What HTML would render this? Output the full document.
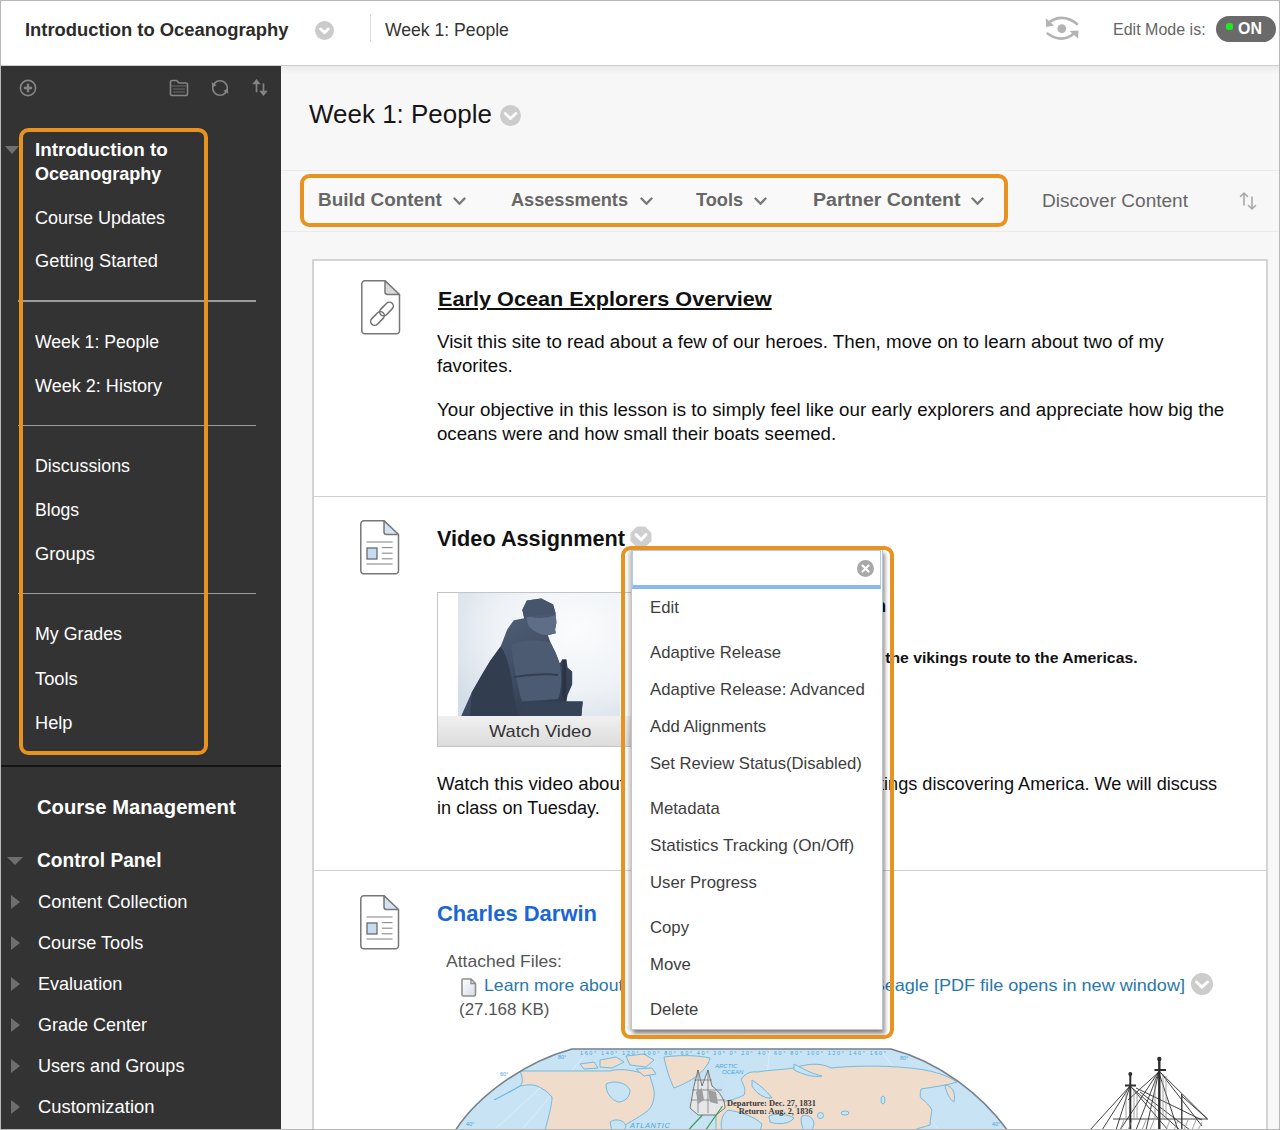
<!DOCTYPE html>
<html><head><meta charset="utf-8">
<style>
html,body{margin:0;padding:0;}
body{width:1280px;height:1130px;overflow:hidden;position:relative;background:#f8f7f8;font-family:"Liberation Sans",sans-serif;}
.a{position:absolute;}
.tx{position:absolute;white-space:nowrap;line-height:1;transform-origin:0 50%;}
</style></head><body>
<!-- main bg -->
<div class="a" style="left:281px;top:66px;width:999px;height:8px;background:linear-gradient(#ebeaeb,#f8f7f8)"></div>
<!-- header -->
<div class="a" style="left:0;top:0;width:1280px;height:65px;background:#fff;border-bottom:1px solid #cfcfcf"></div>
<svg style="position:absolute;left:314.9px;top:21.1px" width="19" height="19" viewBox="0 0 21 21"><circle cx="10.5" cy="10.5" r="10.5" fill="#cbcbcb"/><path d="M6.26 8.90 L10.50 12.90 L14.74 8.90" fill="none" stroke="#fff" stroke-width="3.2" stroke-linecap="round" stroke-linejoin="round"/></svg>
<div class="a" style="left:370px;top:14px;width:1px;height:28px;background:#dcdcdc"></div>
<svg class="a" style="left:1040px;top:10px" width="45" height="38" viewBox="0 0 45 38">
 <g fill="none" stroke="#b3b3b3" stroke-width="2.6" stroke-linecap="round">
  <path d="M37 14 Q23 3 9.5 12"/>
  <path d="M7.5 23.5 Q22 34 34.5 23"/>
 </g>
 <g fill="#b3b3b3">
  <polygon points="5.8,8.2 6.2,17 14,15.6"/>
  <polygon points="38.5,20.5 29.5,21 38,28.5"/>
  <circle cx="21.8" cy="18.6" r="4.4"/>
 </g>
</svg>
<div class="a" style="left:1215.5px;top:16px;width:60px;height:25.5px;border-radius:13px;background:#6a6a6a"></div>
<div class="a" style="left:1225.5px;top:23px;width:7px;height:7px;border-radius:2.5px;background:#22e622"></div>
<!-- sidebar -->
<div class="a" style="left:0;top:66px;width:281px;height:1064px;background:#333333"></div>
<svg class="a" style="left:18px;top:78px" width="20" height="20" viewBox="0 0 20 20">
 <circle cx="10" cy="10" r="7.6" fill="none" stroke="#858585" stroke-width="1.6"/>
 <path d="M10 5.8 V14.2 M5.8 10 H14.2" stroke="#858585" stroke-width="2.4"/>
</svg>
<svg class="a" style="left:168px;top:78px" width="22" height="20" viewBox="0 0 22 20">
 <path d="M4 17.5 H18 A1.5 1.5 0 0 0 19.5 16 V6.5 A1.5 1.5 0 0 0 18 5 H11 L8.5 2.5 H4 A1.5 1.5 0 0 0 2.5 4 V16 A1.5 1.5 0 0 0 4 17.5 Z" fill="none" stroke="#858585" stroke-width="1.6" stroke-linejoin="round"/>
 <path d="M3 8 H19 M5 11 H17 M5 14 H17" stroke="#6a6a6a" stroke-width="1.1"/>
</svg>
<svg class="a" style="left:210px;top:78px" width="20" height="20" viewBox="0 0 20 20">
 <circle cx="10" cy="10" r="7.3" fill="none" stroke="#858585" stroke-width="1.6"/>
 <polygon points="1.6,4.2 2.4,9.6 6.6,7" fill="#858585"/>
 <polygon points="18.4,15.8 17.6,10.4 13.4,13" fill="#858585"/>
</svg>
<svg class="a" style="left:250px;top:77px" width="20" height="21" viewBox="0 0 20 21">
 <g stroke="#858585" stroke-width="1.7" stroke-linecap="round">
  <path d="M6.5 6 V14.5"/>
  <path d="M13.5 7 V15"/>
 </g>
 <g fill="#858585">
  <polygon points="2.2,7.2 6.5,2 10.8,7.2"/>
  <polygon points="9.2,13.8 13.5,19 17.8,13.8"/>
 </g>
</svg>
<div class="a" style="left:5px;top:145.5px;width:0;height:0;border-left:7px solid transparent;border-right:7px solid transparent;border-top:8px solid #707070"></div>
<div class="a" style="left:18px;top:300px;width:238px;height:1.8px;background:#9c9c9c"></div>
<div class="a" style="left:18px;top:424.5px;width:238px;height:1.8px;background:#9c9c9c"></div>
<div class="a" style="left:18px;top:592.5px;width:238px;height:1.8px;background:#9c9c9c"></div>
<div class="a" style="left:19px;top:128px;width:189px;height:627px;box-sizing:border-box;border:4.8px solid #e8921f;border-radius:9.5px"></div>
<div class="a" style="left:0;top:765px;width:281px;height:2px;background:#151515"></div>
<div class="a" style="left:7px;top:856.5px;width:0;height:0;border-left:8px solid transparent;border-right:8px solid transparent;border-top:8px solid #6e6e6e"></div>
<div style="position:absolute;left:11px;top:894.8px;width:0;height:0;border-top:7px solid transparent;border-bottom:7px solid transparent;border-left:9px solid #6e6e6e"></div><div style="position:absolute;left:11px;top:936.0px;width:0;height:0;border-top:7px solid transparent;border-bottom:7px solid transparent;border-left:9px solid #6e6e6e"></div><div style="position:absolute;left:11px;top:976.5px;width:0;height:0;border-top:7px solid transparent;border-bottom:7px solid transparent;border-left:9px solid #6e6e6e"></div><div style="position:absolute;left:11px;top:1017.8px;width:0;height:0;border-top:7px solid transparent;border-bottom:7px solid transparent;border-left:9px solid #6e6e6e"></div><div style="position:absolute;left:11px;top:1058.7px;width:0;height:0;border-top:7px solid transparent;border-bottom:7px solid transparent;border-left:9px solid #6e6e6e"></div><div style="position:absolute;left:11px;top:1099.8px;width:0;height:0;border-top:7px solid transparent;border-bottom:7px solid transparent;border-left:9px solid #6e6e6e"></div>
<!-- toolbar band -->
<div class="a" style="left:281px;top:170px;width:999px;height:60px;background:#f8f7f8;border-top:1px solid #ebeaeb;border-bottom:1px solid #ebeaeb"></div>
<div class="a" style="left:300.3px;top:174px;width:707.5px;height:53px;box-sizing:border-box;border:4.8px solid #e8921f;border-radius:9.5px;background:#f9f9f9"></div>
<svg style="position:absolute;left:452.5px;top:197px" width="13" height="9" viewBox="0 0 13 9"><path d="M1.5 1.5 L6.5 6.8 L11.5 1.5" fill="none" stroke="#7a7a7a" stroke-width="2.4" stroke-linecap="round" stroke-linejoin="round"/></svg>
<svg style="position:absolute;left:639.5px;top:197px" width="13" height="9" viewBox="0 0 13 9"><path d="M1.5 1.5 L6.5 6.8 L11.5 1.5" fill="none" stroke="#7a7a7a" stroke-width="2.4" stroke-linecap="round" stroke-linejoin="round"/></svg>
<svg style="position:absolute;left:753.5px;top:197px" width="13" height="9" viewBox="0 0 13 9"><path d="M1.5 1.5 L6.5 6.8 L11.5 1.5" fill="none" stroke="#7a7a7a" stroke-width="2.4" stroke-linecap="round" stroke-linejoin="round"/></svg>
<svg style="position:absolute;left:970.5px;top:197px" width="13" height="9" viewBox="0 0 13 9"><path d="M1.5 1.5 L6.5 6.8 L11.5 1.5" fill="none" stroke="#7a7a7a" stroke-width="2.4" stroke-linecap="round" stroke-linejoin="round"/></svg>
<svg class="a" style="left:1238px;top:190px" width="21" height="22" viewBox="0 0 21 22">
 <g fill="none" stroke="#a8a8a8" stroke-width="1.6" stroke-linecap="round" stroke-linejoin="round">
  <path d="M6 15 V3 M2.5 6.5 L6 3 L9.5 6.5"/>
  <path d="M14 7 V19 M10.5 15.5 L14 19 L17.5 15.5"/>
 </g>
</svg>
<svg style="position:absolute;left:500.1px;top:105.0px" width="21" height="21" viewBox="0 0 21 21"><circle cx="10.5" cy="10.5" r="10.5" fill="#cccccc"/><path d="M5.20 8.50 L10.50 13.50 L15.80 8.50" fill="none" stroke="#fff" stroke-width="2.7" stroke-linecap="round" stroke-linejoin="round"/></svg>
<!-- content box -->
<div class="a" style="left:312px;top:259px;width:956px;height:900px;box-sizing:border-box;background:#fff;border:2px solid #d4d4d4"></div>
<div class="a" style="left:314px;top:495.5px;width:952px;height:1.5px;background:#d0d0d0"></div>
<div class="a" style="left:314px;top:869.5px;width:952px;height:1.5px;background:#d0d0d0"></div>
<svg style="position:absolute;left:360.5px;top:279.5px" width="40" height="55" viewBox="0 0 40 55"><path d="M3.8 0.8 H24 L38.5 15 V50.8 A3 3 0 0 1 35.5 53.8 H3.8 A3 3 0 0 1 0.8 50.8 V3.8 A3 3 0 0 1 3.8 0.8 Z" fill="#fff" stroke="#777" stroke-width="1.5"/><path d="M24 0.8 V12 A2.5 2.5 0 0 0 26.5 14.5 H38.5 Z" fill="#d9d9d9" stroke="#777" stroke-width="1.5" stroke-linejoin="round"/><g fill="none" stroke="#707070" stroke-width="1.5"><rect x="12.6" y="30.5" width="7.8" height="16" rx="3.9" transform="rotate(45 16.5 38.5)"/><rect x="21.6" y="21" width="7.8" height="16" rx="3.9" transform="rotate(45 25.5 29)"/></g></svg>
<svg style="position:absolute;left:360px;top:520px" width="40" height="55" viewBox="0 0 40 55"><path d="M3.8 0.8 H24 L38.5 15 V50.8 A3 3 0 0 1 35.5 53.8 H3.8 A3 3 0 0 1 0.8 50.8 V3.8 A3 3 0 0 1 3.8 0.8 Z" fill="#fff" stroke="#777" stroke-width="1.5"/><path d="M24 0.8 V12 A2.5 2.5 0 0 0 26.5 14.5 H38.5 Z" fill="#d4e3f3" stroke="#777" stroke-width="1.5" stroke-linejoin="round"/><g stroke="#8a8a8a" stroke-width="1.1"><line x1="6.5" y1="22" x2="32.5" y2="22"/><line x1="21.8" y1="27.6" x2="32.5" y2="27.6"/><line x1="21.8" y1="33.2" x2="32.5" y2="33.2"/><line x1="21.8" y1="38.8" x2="32.5" y2="38.8"/><line x1="6.5" y1="44" x2="32.5" y2="44"/></g><rect x="7" y="28" width="10" height="11" fill="#c6dcf4" stroke="#6a6a6a" stroke-width="1.3"/></svg>
<svg style="position:absolute;left:360px;top:894.5px" width="40" height="55" viewBox="0 0 40 55"><path d="M3.8 0.8 H24 L38.5 15 V50.8 A3 3 0 0 1 35.5 53.8 H3.8 A3 3 0 0 1 0.8 50.8 V3.8 A3 3 0 0 1 3.8 0.8 Z" fill="#fff" stroke="#777" stroke-width="1.5"/><path d="M24 0.8 V12 A2.5 2.5 0 0 0 26.5 14.5 H38.5 Z" fill="#d4e3f3" stroke="#777" stroke-width="1.5" stroke-linejoin="round"/><g stroke="#8a8a8a" stroke-width="1.1"><line x1="6.5" y1="22" x2="32.5" y2="22"/><line x1="21.8" y1="27.6" x2="32.5" y2="27.6"/><line x1="21.8" y1="33.2" x2="32.5" y2="33.2"/><line x1="21.8" y1="38.8" x2="32.5" y2="38.8"/><line x1="6.5" y1="44" x2="32.5" y2="44"/></g><rect x="7" y="28" width="10" height="11" fill="#c6dcf4" stroke="#6a6a6a" stroke-width="1.3"/></svg>
<!-- video box -->
<div class="a" style="left:437px;top:591.5px;width:200px;height:155px;box-sizing:border-box;border:1px solid #c4c4c4;background:#fff"></div>
<div class="a" style="left:458px;top:593px;width:162px;height:123px;background:radial-gradient(ellipse at 60% 40%,#f4f7fb,#dfe8f0)"></div>
<svg class="a" style="left:458px;top:593px" width="162" height="123" viewBox="0 0 162 123">
 <defs>
  <radialGradient id="sky" cx="0.72" cy="0.3" r="0.9"><stop offset="0" stop-color="#fbfcfd"/><stop offset="0.55" stop-color="#eef2f6"/><stop offset="1" stop-color="#d2dde7"/></radialGradient>
  <linearGradient id="stone" x1="0.2" y1="0" x2="0.8" y2="1"><stop offset="0" stop-color="#56657d"/><stop offset="0.5" stop-color="#435068"/><stop offset="1" stop-color="#2d384b"/></linearGradient>
 </defs>
 <rect width="162" height="123" fill="url(#sky)"/>
 <path d="M3.2 123 L13.7 99.4 L24.3 81 L32.1 67.9 L42.6 53.4 L45.2 46.9 L49.2 36.4 L55.8 27.2 L66.2 25.2 L64.3 16.7 L68.9 7.5 L83.3 5.5 L95.1 11.4 L97.7 20.6 L98.4 29.8 L97.1 36.4 L97.7 40.3 L89.9 42.3 L92.5 49.5 L97.7 60 L101.7 70.5 L104.3 66.6 L108.3 66.6 L109.6 74.4 L114.2 78.4 L114.2 91.5 L109.6 102 L108.3 108.6 L124.7 108.6 L123.3 123 Z" fill="url(#stone)"/>
 <path d="M24.3 81 L32.1 67.9 L42.6 53.4 C48 60 52 75 54 90 C56 104 58 114 60 123 L12 123 L13.7 99.4 Z" fill="#323d50"/>
 <path d="M53 52 C64 46 80 46 92.5 49.5 L97.7 60 L101.7 70.5 C104 84 104 96 100 106 L64 108.6 C60 96 57 80 53 52 Z" fill="#4c5a72"/>
 <path d="M68 22 C76 26 88 26 97.7 22 L98.4 29.8 L97.1 36.4 L97.7 40.3 L89.9 42.3 C82 42 74 38 70 32 Z" fill="#5f6e86"/>
 <path d="M64.3 16.7 L68.9 7.5 L83.3 5.5 L95.1 11.4 L97.7 20.6 C88 22 76 22 66.2 25.2 Z" fill="#47556c"/>
 <path d="M56 84 C70 82 86 80 100 82" stroke="#343f52" stroke-width="2" fill="none"/>
 <path d="M64 108.6 L124.7 108.6 L123.3 123 L62 123 Z" fill="#364256"/>
 <path d="M104.3 66.6 L108.3 66.6 L108.3 108.6 L104.3 104 Z" fill="#2a3444"/>
</svg>
<div class="a" style="left:438px;top:716px;width:198px;height:29.5px;background:linear-gradient(#f0f0f0,#dcdcdc)"></div>
<svg class="a" style="left:630px;top:526px" width="22" height="22" viewBox="0 0 22 22">
 <polygon points="7,0.5 15,0.5 21.5,7 21.5,15 15,21.5 7,21.5 0.5,15 0.5,7" fill="#cfcfcf"/>
 <path d="M6 8.6 L11 13.8 L16 8.6" fill="none" stroke="#fff" stroke-width="3" stroke-linecap="round" stroke-linejoin="round"/>
</svg>
<!-- darwin -->
<svg class="a" style="left:460.5px;top:977.5px" width="16" height="19" viewBox="0 0 16 19">
 <defs><linearGradient id="fg" x1="0" y1="0" x2="1" y2="1"><stop offset="0" stop-color="#fff"/><stop offset="1" stop-color="#d5dce5"/></linearGradient></defs>
 <path d="M2 1 H10 L14.5 5.5 V16.5 A1.5 1.5 0 0 1 13 18 H2.5 A1.5 1.5 0 0 1 1 16.5 V2 A1 1 0 0 1 2 1 Z" fill="url(#fg)" stroke="#8e8e8e" stroke-width="1.6"/>
 <path d="M10 1 V5.5 H14.5" fill="none" stroke="#8e8e8e" stroke-width="1.4"/>
</svg>
<svg style="position:absolute;left:1191.0px;top:973.0px" width="22" height="22" viewBox="0 0 21 21"><circle cx="10.5" cy="10.5" r="10.5" fill="#cccccc"/><path d="M5.20 8.50 L10.50 13.50 L15.80 8.50" fill="none" stroke="#fff" stroke-width="2.7" stroke-linecap="round" stroke-linejoin="round"/></svg>
<!-- map -->
<svg class="a" style="left:440px;top:1040px" width="600" height="90" viewBox="0 0 600 90">
 <defs><clipPath id="mc"><path d="M15 91 C38 55 85 22 132 9 L451 9 C500 22 542 55 568 91 Z"/></clipPath></defs>
 <path d="M15 91 C38 55 85 22 132 9 L451 9 C500 22 542 55 568 91 Z" fill="#c8e3f3"/>
 <g clip-path="url(#mc)">
  <g fill="none" stroke="#dcedf8" stroke-width="1">
   <path d="M52 92 L120 30 M80 92 L150 9 M320 92 L330 9 M500 92 L440 9"/>
  </g>
  <g fill="#efdcca" stroke="#69b6e0" stroke-width="0.9" stroke-linejoin="round">
   <path d="M80 31 L170 31 C180 28 195 30 210 36 L214 50 C215 60 212 68 206 72 C198 78 186 84 176 91 L105 91 C108 78 112 66 112 57 C108 52 102 48 97 46 C92 44 86 45 80 46 C84 42 82 36 80 31 Z"/>
   <path d="M224 17 C240 15 256 15 270 18 C268 28 256 40 234 48 C230 40 226 28 224 17 Z"/>
   <path d="M160 20 L176 17 L184 22 L172 28 L160 27 Z"/>
   <path d="M186 16 L204 14 L214 20 L206 27 L190 25 Z"/>
   <path d="M196 29 L212 28 L216 34 L204 36 Z"/>
   <path d="M140 24 L154 22 L158 28 L144 29 Z"/>
   <path d="M301 40 C304 34 310 31 318 32 C328 30 340 30 354 28 C366 24 380 22 391 28 C410 26 440 25 470 28 C490 30 505 34 517 42 C505 46 492 47 481 49 C480 54 480 57 481 58 C486 62 490 66 492 70 C491 76 490 80 490 85 C484 87 478 88 472 91 L276 91 L276 62 C288 62 298 58 304 55 C306 50 304 45 301 40 Z"/>
   <path d="M505 45 C512 46 516 52 514 62 C510 60 506 52 505 45 Z"/>
  </g>
  <g fill="#c8e3f3" stroke="#69b6e0" stroke-width="0.9">
   <path d="M166 44 C174 40 186 42 190 50 C190 58 184 62 178 62 C172 60 166 54 166 44 Z"/>
   <path d="M312 40 C318 44 326 50 332 58 C324 59 316 53 312 46 Z"/>
   <path d="M354 24 C362 28 372 34 382 36 C374 38 362 34 354 30 Z"/>
   <path d="M329 76 C336 73 348 74 354 78 C350 84 338 85 330 82 Z"/>
   <path d="M362 76 C368 74 374 78 374 84 L372 91 L364 91 C362 86 360 80 362 76 Z"/>
   <path d="M288 70 C300 72 314 76 322 84 L320 91 L282 91 C280 82 282 74 288 70 Z"/>
   <ellipse cx="443" cy="60" rx="2" ry="4"/>
   <ellipse cx="405" cy="73" rx="4" ry="2"/>
   <circle cx="380.5" cy="75.5" r="3"/>
   <path d="M170 82 C176 78 184 80 186 86 L184 91 L172 91 Z"/>
  </g>
  <path d="M80 46 C70 52 62 56 54 60" fill="none" stroke="#69b6e0" stroke-width="1.2"/>
  <g opacity="0.95">
   <path d="M250 68 L254 46 L258 30 L262 46 L268 30 L272 46 C280 52 285 60 285 68 L276 75 L258 75 Z" fill="#e6e6e6" stroke="#555" stroke-width="0.8"/>
   <path d="M258 30 V73 M268 30 V73 M252 50 H282 M251 60 H285 M254 40 H272" stroke="#666" stroke-width="0.7" fill="none"/>
   <path d="M256 52 L262 48 L264 60 L258 64 Z M268 50 L276 52 L278 64 L270 62 Z" fill="#9a9a9a"/>
  </g>
  <path d="M262.5 75 L247.5 91 M282.5 66 L265 91" stroke="#3a9a5a" stroke-width="1.2"/>
 </g>
 <path d="M15 91 C38 55 85 22 132 9 L451 9 C500 22 542 55 568 91" fill="none" stroke="#74808a" stroke-width="1.6"/>
 <g font-family="Liberation Sans" font-size="5.5" fill="#4aa6d9">
  <text x="140" y="14.5" textLength="306" lengthAdjust="spacing">160° 140° 120° 100° 80° 60° 40° 20° 0° 20° 40° 60° 80° 100° 120° 140° 160°</text>
  <text x="118" y="19">80°</text><text x="460" y="20">80°</text>
  <text x="60" y="36">60°</text><text x="26" y="86">40°</text><text x="552" y="86">40°</text>
  <text x="190" y="88" font-size="7.5" font-style="italic" letter-spacing="0.6">ATLANTIC</text>
  <text x="275" y="28" font-size="6" font-style="italic">ARCTIC</text>
  <text x="282" y="34" font-size="6" font-style="italic">OCEAN</text>
 </g>
 <text x="287" y="66" font-family="Liberation Serif" font-size="9" font-weight="700" fill="#3a3a3a" textLength="89" lengthAdjust="spacingAndGlyphs">Departure: Dec. 27, 1831</text>
 <text x="298.7" y="74" font-family="Liberation Serif" font-size="9" font-weight="700" fill="#3a3a3a" textLength="74" lengthAdjust="spacingAndGlyphs">Return: Aug. 2, 1836</text>
</svg>
<svg class="a" style="left:1080px;top:1040px" width="140" height="90" viewBox="0 0 140 90">
 <g stroke="#2e2e2e" fill="none">
  <path d="M50.3 34 V90" stroke-width="2"/>
  <path d="M79.3 19 V90" stroke-width="2.4"/>
  <path d="M101.8 54 V90" stroke-width="1.3"/>
  <path d="M45 45.5 H56 M74.5 30 H86" stroke-width="2"/>
  <g stroke-width="0.9">
   <path d="M50 46 L10 90 M50 46 L22 90 M50 46 L36 90 M50 46 L100 90 M52 48 L88 90 M48 60 L80 31"/>
   <path d="M79 31 L40 90 M79 31 L56 90 M79 31 L127.5 79 M81 33 L122 86 M79 33 L98 90 M56 48 L122 80 M79 31 L66 90"/>
   <path d="M33 79 H127.5 M101.8 56 L127.5 79 M60 52 L110 90"/>
  </g>
  <g stroke="#8a8a8a" stroke-width="0.8">
   <path d="M40 90 L44 80 M48 90 L52 80 M62 90 L66 80 M70 90 L74 80 M86 90 L90 80 M94 90 L98 80 M104 90 L108 80 M112 90 L116 80 M118 90 L122 82"/>
   <path d="M54 50 L54 78 M57 52 L57 78 M83 34 L83 78 M86 36 L86 78 M46 52 V78 M75 36 V78"/>
  </g>
 </g>
 <circle cx="50.3" cy="34" r="2" fill="#2e2e2e"/>
 <circle cx="79.3" cy="19" r="2.2" fill="#2e2e2e"/>
</svg>
<div class="tx" id="t0" style="left:25.0px;top:20.76px;font-size:18px;font-weight:700;color:#2b2b2b;transform:scaleX(1.0213);">Introduction to Oceanography</div>
<div class="tx" id="t1" style="left:385.1px;top:20.56px;font-size:18px;font-weight:400;color:#333;transform:scaleX(0.9775);">Week 1: People</div>
<div class="tx" id="t2" style="left:1112.9px;top:21.18px;font-size:16.2px;font-weight:400;color:#666;transform:scaleX(0.9895);">Edit Mode is:</div>
<div class="tx" id="t3" style="left:1238.3px;top:21.05px;font-size:16px;font-weight:700;color:#fff;transform:scaleX(0.9958);">ON</div>
<div class="tx" id="t4" style="left:35.2px;top:140.84px;font-size:18.5px;font-weight:700;color:#fff;transform:scaleX(1.0176);">Introduction to</div>
<div class="tx" id="t5" style="left:35.2px;top:165.34px;font-size:18.5px;font-weight:700;color:#fff;transform:scaleX(0.9749);">Oceanography</div>
<div class="tx" id="t6" style="left:35.0px;top:208.76px;font-size:18px;font-weight:400;color:#fff;">Course Updates</div>
<div class="tx" id="t7" style="left:35.0px;top:251.76px;font-size:18px;font-weight:400;color:#fff;transform:scaleX(1.0159);">Getting Started</div>
<div class="tx" id="t8" style="left:35.0px;top:332.76px;font-size:18px;font-weight:400;color:#fff;transform:scaleX(0.9783);">Week 1: People</div>
<div class="tx" id="t9" style="left:35.0px;top:376.76px;font-size:18px;font-weight:400;color:#fff;transform:scaleX(1.0023);">Week 2: History</div>
<div class="tx" id="t10" style="left:35.0px;top:457.16px;font-size:18px;font-weight:400;color:#fff;transform:scaleX(0.9893);">Discussions</div>
<div class="tx" id="t11" style="left:35.0px;top:501.16px;font-size:18px;font-weight:400;color:#fff;transform:scaleX(0.9771);">Blogs</div>
<div class="tx" id="t12" style="left:35.0px;top:544.76px;font-size:18px;font-weight:400;color:#fff;transform:scaleX(1.0164);">Groups</div>
<div class="tx" id="t13" style="left:35.0px;top:624.76px;font-size:18px;font-weight:400;color:#fff;transform:scaleX(0.9883);">My Grades</div>
<div class="tx" id="t14" style="left:35.0px;top:670.16px;font-size:18px;font-weight:400;color:#fff;transform:scaleX(1.0183);">Tools</div>
<div class="tx" id="t15" style="left:35.0px;top:713.76px;font-size:18px;font-weight:400;color:#fff;transform:scaleX(1.0100);">Help</div>
<div class="tx" id="t16" style="left:37.2px;top:798.44px;font-size:19.8px;font-weight:700;color:#fff;transform:scaleX(1.0208);">Course Management</div>
<div class="tx" id="t17" style="left:37.2px;top:850.84px;font-size:19.8px;font-weight:700;color:#fff;transform:scaleX(0.9682);">Control Panel</div>
<div class="tx" id="t18" style="left:37.6px;top:892.64px;font-size:18.5px;font-weight:400;color:#fff;transform:scaleX(0.9889);">Content Collection</div>
<div class="tx" id="t19" style="left:37.6px;top:933.84px;font-size:18.5px;font-weight:400;color:#fff;transform:scaleX(0.9783);">Course Tools</div>
<div class="tx" id="t20" style="left:37.6px;top:975.14px;font-size:18.5px;font-weight:400;color:#fff;transform:scaleX(0.9745);">Evaluation</div>
<div class="tx" id="t21" style="left:37.6px;top:1016.14px;font-size:18.5px;font-weight:400;color:#fff;transform:scaleX(0.9724);">Grade Center</div>
<div class="tx" id="t22" style="left:37.6px;top:1057.04px;font-size:18.5px;font-weight:400;color:#fff;transform:scaleX(0.9752);">Users and Groups</div>
<div class="tx" id="t23" style="left:37.6px;top:1098.04px;font-size:18.5px;font-weight:400;color:#fff;transform:scaleX(0.9930);">Customization</div>
<div class="tx" id="t24" style="left:308.9px;top:101.08px;font-size:26.6px;font-weight:400;color:#151515;transform:scaleX(0.9767);">Week 1: People</div>
<div class="tx" id="t25" style="left:318.0px;top:191.21px;font-size:18.3px;font-weight:700;color:#666;transform:scaleX(1.0340);">Build Content</div>
<div class="tx" id="t26" style="left:511.0px;top:191.21px;font-size:18.3px;font-weight:700;color:#666;transform:scaleX(0.9924);">Assessments</div>
<div class="tx" id="t27" style="left:696.0px;top:191.21px;font-size:18.3px;font-weight:700;color:#666;transform:scaleX(0.9918);">Tools</div>
<div class="tx" id="t28" style="left:812.5px;top:191.21px;font-size:18.3px;font-weight:700;color:#666;transform:scaleX(1.0678);">Partner Content</div>
<div class="tx" id="t29" style="left:1042.0px;top:191.81px;font-size:18.3px;font-weight:400;color:#666;transform:scaleX(1.0412);">Discover Content</div>
<div class="tx" id="t30" style="left:438.0px;top:289.30px;font-size:20.2px;font-weight:700;color:#111;transform:scaleX(1.0735);text-decoration:underline;text-decoration-thickness:2px;text-underline-offset:2px;">Early Ocean Explorers Overview</div>
<div class="tx" id="t31" style="left:437.0px;top:334.00px;font-size:17.6px;font-weight:400;color:#0e0e0e;transform:scaleX(1.0669);">Visit this site to read about a few of our heroes. Then, move on to learn about two of my</div>
<div class="tx" id="t32" style="left:437.0px;top:358.40px;font-size:17.6px;font-weight:400;color:#0e0e0e;transform:scaleX(1.0600);">favorites.</div>
<div class="tx" id="t33" style="left:437.0px;top:401.90px;font-size:17.6px;font-weight:400;color:#0e0e0e;transform:scaleX(1.0643);">Your objective in this lesson is to simply feel like our early explorers and appreciate how big the</div>
<div class="tx" id="t34" style="left:437.0px;top:426.30px;font-size:17.6px;font-weight:400;color:#0e0e0e;transform:scaleX(1.0600);">oceans were and how small their boats seemed.</div>
<div class="tx" id="t35" style="left:437.0px;top:529.00px;font-size:21.5px;font-weight:700;color:#111;transform:scaleX(1.0087);">Video Assignment</div>
<div class="tx" id="t36" style="left:489.3px;top:723.41px;font-size:17px;font-weight:400;color:#333;transform:scaleX(1.0717);">Watch Video</div>
<div class="tx" id="t37" style="left:717.3px;top:596.76px;font-size:18px;font-weight:700;color:#111;transform:scaleX(1.0400);">Video: Leif Erikson</div>
<div class="tx" id="t38" style="left:708.5px;top:649.50px;font-size:15px;font-weight:700;color:#111;transform:scaleX(1.0500);">Watch this video about the vikings route to the Americas.</div>
<div class="tx" id="t39" style="left:437.0px;top:775.60px;font-size:17.6px;font-weight:400;color:#0e0e0e;transform:scaleX(1.0600);">Watch this video about</div>
<div class="tx" id="t40" style="left:829.3px;top:775.60px;font-size:17.6px;font-weight:400;color:#0e0e0e;transform:scaleX(1.0300);">the Vikings discovering America. We will discuss</div>
<div class="tx" id="t41" style="left:437.0px;top:799.90px;font-size:17.6px;font-weight:400;color:#0e0e0e;transform:scaleX(1.0297);">in class on Tuesday.</div>
<div class="tx" id="t42" style="left:437.3px;top:903.80px;font-size:21.5px;font-weight:700;color:#1a66d6;transform:scaleX(1.0222);">Charles Darwin</div>
<div class="tx" id="t43" style="left:445.5px;top:952.51px;font-size:17px;font-weight:400;color:#555;transform:scaleX(1.0315);">Attached Files:</div>
<div class="tx" id="t44" style="left:483.5px;top:977.43px;font-size:16.5px;font-weight:400;color:#2878ab;transform:scaleX(1.0700);">Learn more about</div>
<div class="tx" id="t45" style="left:728.8px;top:977.43px;font-size:16.5px;font-weight:400;color:#2878ab;transform:scaleX(1.0950);">the voyage of the Beagle [PDF file opens in new window]</div>
<div class="tx" id="t46" style="left:459.3px;top:1000.91px;font-size:17px;font-weight:400;color:#555;transform:scaleX(0.9963);">(27.168 KB)</div>
<!-- menu -->
<div class="a" style="left:631px;top:549px;width:251.5px;height:481px;box-sizing:border-box;background:#fff;border:1px solid #c4c4c4;box-shadow:-3px 1px 3px rgba(0,0,0,0.16),2px 4px 4px rgba(0,0,0,0.42)"></div>
<div class="a" style="left:631.5px;top:550px;width:249.5px;height:39px;box-sizing:border-box;background:#fff;border:1.5px solid #a9cdf5;border-bottom:4px solid #85baf2"></div>
<svg class="a" style="left:857px;top:559.5px" width="17" height="17" viewBox="0 0 17 17">
 <circle cx="8.5" cy="8.5" r="8.5" fill="#a8a8a8"/>
 <path d="M5.5 5.5 L11.5 11.5 M11.5 5.5 L5.5 11.5" stroke="#fff" stroke-width="2.2" stroke-linecap="round"/>
</svg>
<div class="a" style="left:620.5px;top:546px;width:273px;height:492.5px;box-sizing:border-box;border:4.8px solid #e8921f;border-radius:9.5px"></div>
<div class="tx" id="t47" style="left:650.2px;top:599.01px;font-size:16.4px;font-weight:400;color:#3d3d3d;transform:scaleX(1.0200);">Edit</div>
<div class="tx" id="t48" style="left:650.2px;top:643.81px;font-size:16.4px;font-weight:400;color:#3d3d3d;transform:scaleX(1.0200);">Adaptive Release</div>
<div class="tx" id="t49" style="left:650.2px;top:680.81px;font-size:16.4px;font-weight:400;color:#3d3d3d;transform:scaleX(1.0248);">Adaptive Release: Advanced</div>
<div class="tx" id="t50" style="left:650.2px;top:717.91px;font-size:16.4px;font-weight:400;color:#3d3d3d;transform:scaleX(1.0200);">Add Alignments</div>
<div class="tx" id="t51" style="left:650.2px;top:754.91px;font-size:16.4px;font-weight:400;color:#3d3d3d;transform:scaleX(1.0152);">Set Review Status(Disabled)</div>
<div class="tx" id="t52" style="left:650.2px;top:800.21px;font-size:16.4px;font-weight:400;color:#3d3d3d;transform:scaleX(1.0200);">Metadata</div>
<div class="tx" id="t53" style="left:650.2px;top:836.81px;font-size:16.4px;font-weight:400;color:#3d3d3d;transform:scaleX(1.0438);">Statistics Tracking (On/Off)</div>
<div class="tx" id="t54" style="left:650.2px;top:873.81px;font-size:16.4px;font-weight:400;color:#3d3d3d;transform:scaleX(1.0200);">User Progress</div>
<div class="tx" id="t55" style="left:650.2px;top:919.11px;font-size:16.4px;font-weight:400;color:#3d3d3d;transform:scaleX(1.0200);">Copy</div>
<div class="tx" id="t56" style="left:650.2px;top:955.81px;font-size:16.4px;font-weight:400;color:#3d3d3d;transform:scaleX(1.0200);">Move</div>
<div class="tx" id="t57" style="left:650.2px;top:1000.81px;font-size:16.4px;font-weight:400;color:#3d3d3d;transform:scaleX(1.0200);">Delete</div>
<!-- frame -->
<div class="a" style="left:0;top:0;width:1280px;height:1130px;box-sizing:border-box;border:1px solid #b8b8b8;pointer-events:none"></div>
</body></html>
